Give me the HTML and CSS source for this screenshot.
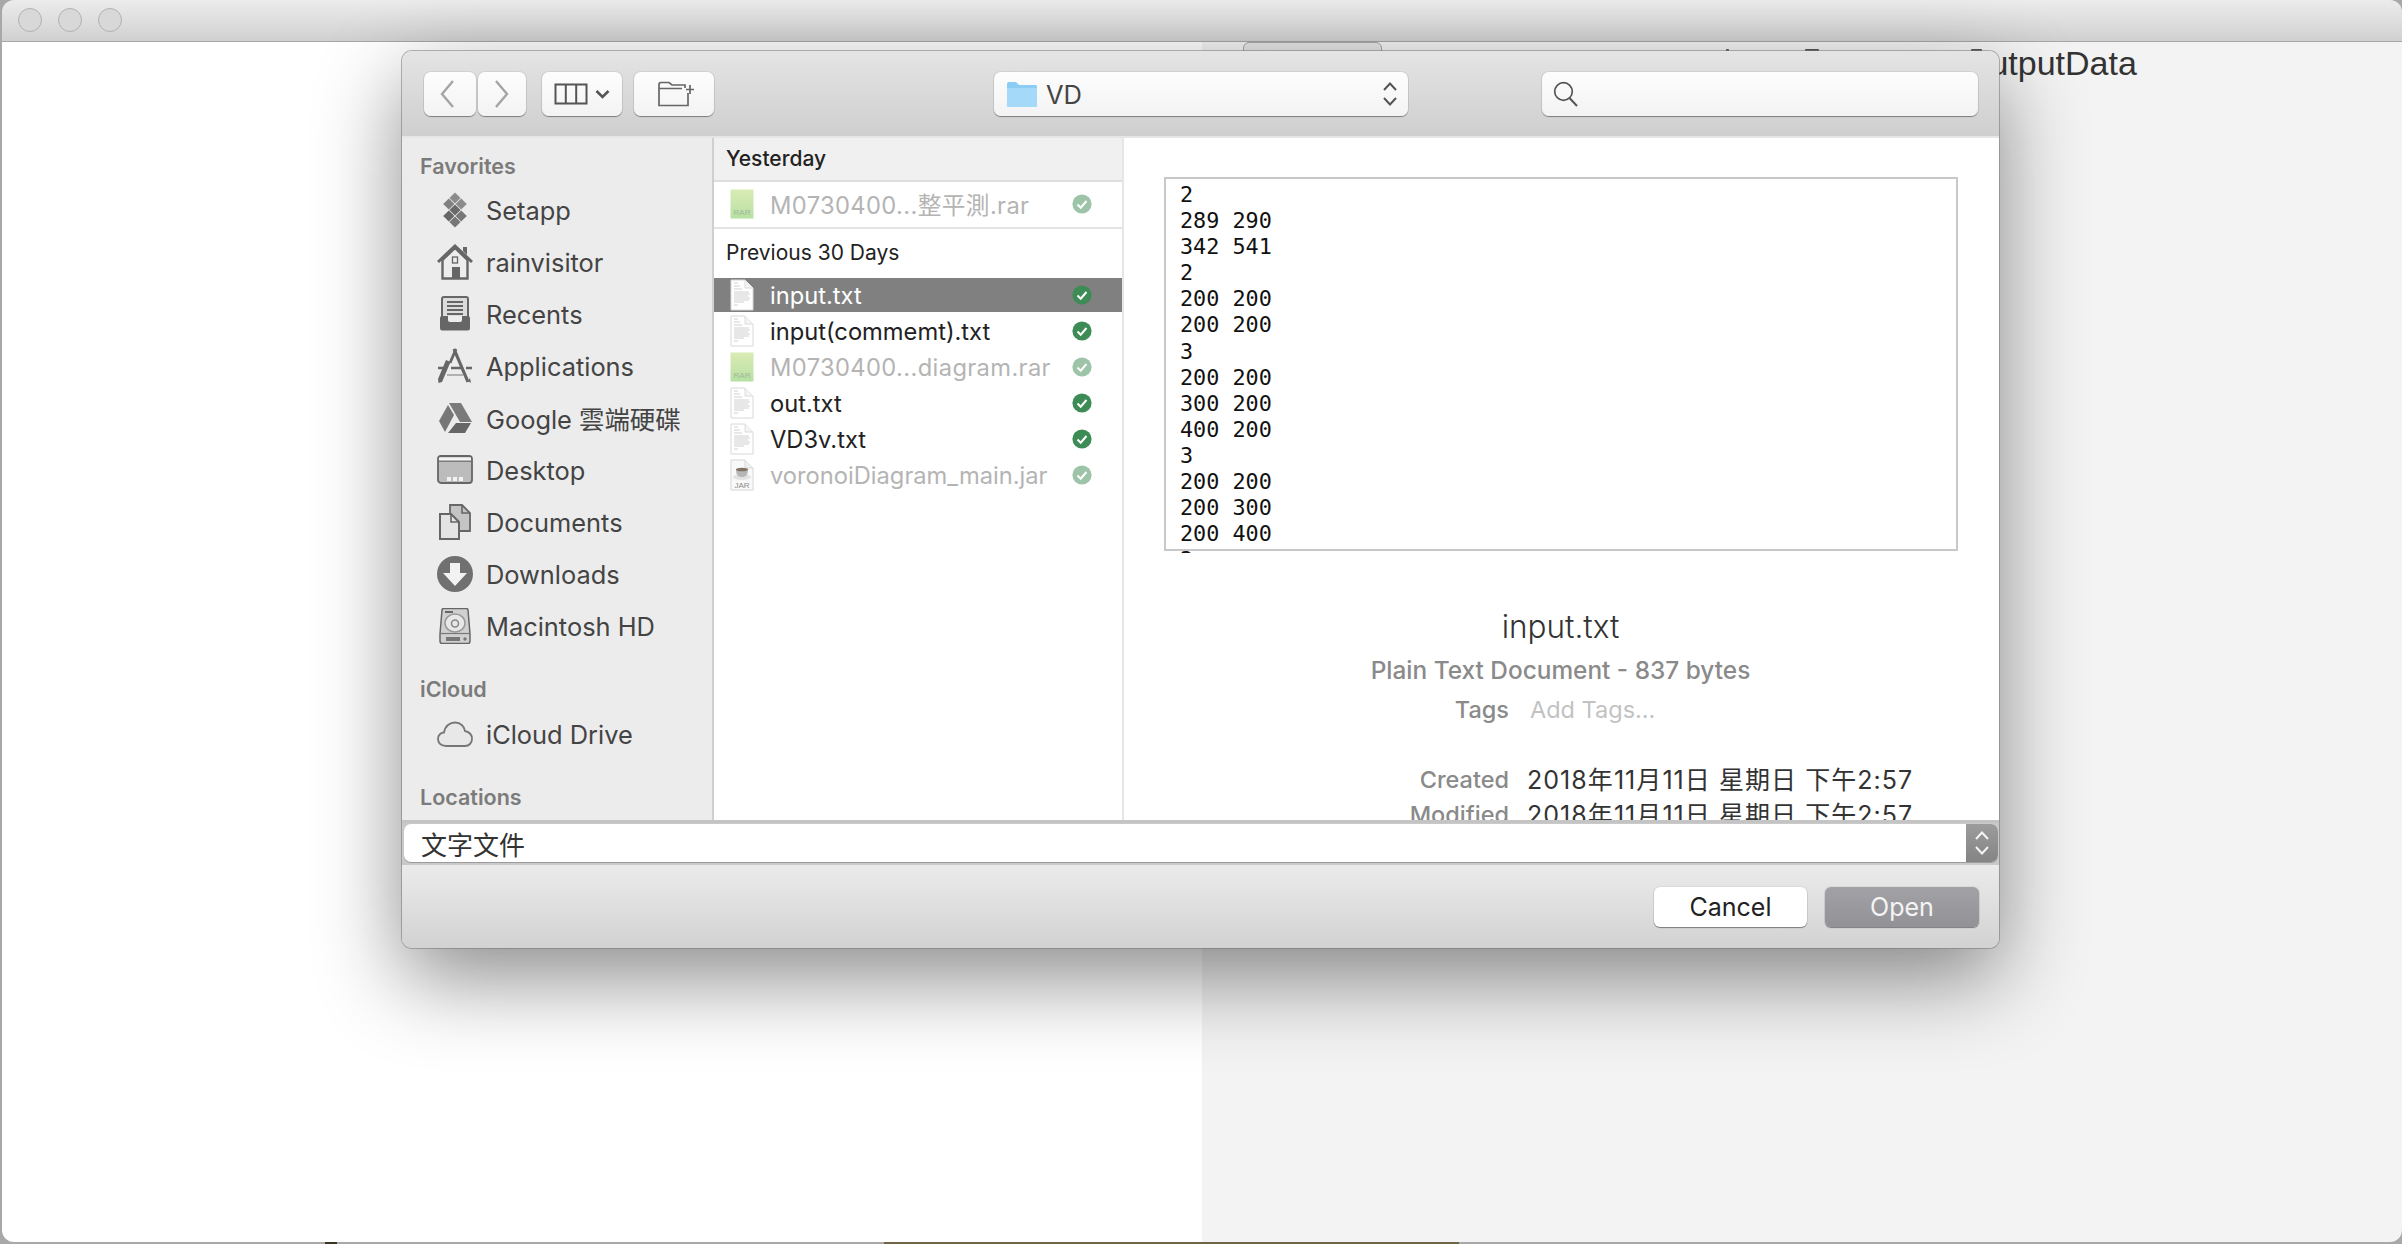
FILE: index.html
```html
<!DOCTYPE html>
<html lang="en">
<head>
<meta charset="utf-8">
<title>Open</title>
<link rel="stylesheet" href="styles.css">
</head>
<body>
<svg class="sprite" width="0" height="0" aria-hidden="true">
  <symbol id="doc" viewBox="0 0 24 32">
    <path d="M1 1H15L23 9V31H1Z" fill="#fff" stroke="#d8d8d8"/>
    <path d="M15 1V9H23" fill="#f4f4f4" stroke="#dcdcdc"/>
    <path d="M4 4H8M4 7H10M4 10H12M4 13H19M4 15H20M4 17H18M4 19H20M4 21H19M4 23H14M4 26H8" stroke="#c4c4c4" stroke-width=".8"/>
  </symbol>
  <symbol id="rar" viewBox="0 0 24 30">
    <defs><linearGradient id="rarfill" x1="0" y1="0" x2="0" y2="1"><stop offset="0" stop-color="#d4e8a8"/><stop offset=".7" stop-color="#b8e09a"/><stop offset="1" stop-color="#a8dc92"/></linearGradient></defs>
    <rect x=".5" y=".5" width="23" height="29" fill="url(#rarfill)"/>
    <text x="12" y="26" text-anchor="middle" class="tiny" fill="#8fa98a">RAR</text>
  </symbol>
  <symbol id="jar" viewBox="0 0 24 32">
    <path d="M1 1H15L23 9V31H1Z" fill="#f8f8f8" stroke="#d0d0d0"/>
    <path d="M15 1V9H23" fill="#eee" stroke="#d0d0d0"/>
    <ellipse cx="12" cy="18" rx="9" ry="3" fill="#ddd"/>
    <path d="M6 10H18C18 16 16 18 12 18S6 16 6 10Z" fill="#aaa"/>
    <ellipse cx="12" cy="10.500" rx="6" ry="1.800" fill="#6b5b4b"/>
    <text x="12" y="29" text-anchor="middle" class="tiny" fill="#777">JAR</text>
  </symbol>
  <symbol id="check" viewBox="0 0 20 20">
    <circle cx="10" cy="10" r="9.600" fill="#3d8b55"/>
    <path d="M5.500 10.500L8.700 13.700L14.500 7" fill="none" stroke="#fff" stroke-width="2"/>
  </symbol>
  <symbol id="updown" viewBox="0 0 16 26">
    <path d="M2 9L8 2.500L14 9M2 17L8 23.500L14 17" fill="none" stroke="currentColor" stroke-width="2"/>
  </symbol>
</svg>

<div class="window">
  <header class="titlebar">
    <span class="light"></span><span class="light"></span><span class="light"></span>
  </header>
  <div class="panes">
    <div class="pane-left"></div>
    <div class="pane-right">
      <div class="tab"></div>
      <div class="output-label">OutputData</div>
    </div>
  </div>
</div>
<span class="speck speck-a"></span><span class="speck speck-b"></span><span class="speck speck-c"></span>

<section class="dialog">
  <div class="toolbar">
    <button class="tb back"><svg width="16" height="30" viewBox="0 0 16 30"><path d="M14 2L3 15L14 28" fill="none" stroke="#a4a4a4" stroke-width="2.400"/></svg></button>
    <button class="tb fwd"><svg width="16" height="30" viewBox="0 0 16 30"><path d="M2 2L13 15L2 28" fill="none" stroke="#a4a4a4" stroke-width="2.400"/></svg></button>
    <button class="tb view">
      <svg width="34" height="22" viewBox="0 0 34 22"><path d="M1.500 1.500H32.500V20.500H1.500ZM11.800 1.500V20.500M22.200 1.500V20.500" fill="none" stroke="#555" stroke-width="2"/></svg>
      <svg width="15" height="10" viewBox="0 0 15 10"><path d="M1.500 2L7.500 8L13.500 2" fill="none" stroke="#555" stroke-width="2.600"/></svg>
    </button>
    <button class="tb newfolder"><svg width="36" height="26" viewBox="0 0 36 26"><path d="M1 4C1 2 1.500 1.500 3 1.500H11L14 4H27V7M1 4V24.500H30V12M1 7.500H24" fill="none" stroke="#666" stroke-width="1.700"/><path d="M28 8.500H36M32 4V13" fill="none" stroke="#666" stroke-width="1.700"/></svg></button>
    <div class="tb location">
      <svg class="folder" width="30" height="25" viewBox="0 0 30 25"><path d="M0 3C0 1 .5 0 2 0H9L12 3H28C29.500 3 30 3.500 30 5V23C30 24.500 29.500 25 28 25H2C.5 25 0 24.500 0 23Z" fill="#8ccdf6"/><path d="M0 6H30V23C30 24.500 29.500 25 28 25H2C.5 25 0 24.500 0 23Z" fill="#a4d9fa"/></svg>
      <span class="loc-name">VD</span>
      <svg class="updown" width="16" height="26"><use href="#updown"/></svg>
    </div>
    <div class="tb search"><svg width="26" height="26" viewBox="0 0 26 26"><circle cx="10.500" cy="10.500" r="8.800" fill="none" stroke="#555" stroke-width="1.700"/><path d="M16.500 17L24 25" stroke="#555" stroke-width="2"/></svg></div>
  </div>

  <div class="main">
    <aside class="sidebar">
      <h3 class="side-head first">Favorites</h3>
      <div class="side-item">
        <svg class="side-icon" viewBox="0 0 36 36"><path d="M18 .4L23.600 6L18 11.600L12.400 6Z" fill="#8c8c8c"/><path d="M11.800 6.400L17.400 12L11.800 17.600L6.200 12Z" fill="#808080"/><path d="M24.200 6.400L29.800 12L24.200 17.600L18.600 12Z" fill="#8c8c8c"/><path d="M18 12.400L23.600 18L18 23.600L12.400 18Z" fill="#6a6a6a"/><path d="M11.800 18.400L17.400 24L11.800 29.600L6.200 24Z" fill="#666"/><path d="M24.200 18.400L29.800 24L24.200 29.600L18.600 24Z" fill="#777"/><path d="M18 24.400L23.600 30L18 35.600L12.400 30Z" fill="#777"/></svg>
        <span>Setapp</span>
      </div>
      <div class="side-item">
        <svg class="side-icon" viewBox="0 0 36 36"><path d="M5.500 16V34.500H30.500V16L18 4Z" fill="#ededed" stroke="#666" stroke-width="2.400"/><path d="M1 18L18 2L35 18" fill="none" stroke="#666" stroke-width="3"/><path d="M26 3H30V11L26 7Z" fill="#666"/><rect x="15" y="23" width="8" height="12" fill="#666"/><rect x="15.500" y="13" width="5" height="6" fill="none" stroke="#666" stroke-width="1.300"/></svg>
        <span>rainvisitor</span>
      </div>
      <div class="side-item">
        <svg class="side-icon" viewBox="0 0 36 36"><path d="M5 3Q5 1 7 1H29Q31 1 31 3V22H5Z" fill="#dcdcdc" stroke="#666" stroke-width="2"/><path d="M10 6H26M10 10H26M10 14H26M10 18H26" stroke="#666" stroke-width="2"/><path d="M3 22Q3 20 5 20H31Q33 20 33 22V32Q33 34.500 31 34.500H5Q3 34.500 3 32Z" fill="#666"/><path d="M11 20V24Q11 26 13 26H23Q25 26 25 24V20Z" fill="#ececec"/></svg>
        <span>Recents</span>
      </div>
      <div class="side-item">
        <svg class="side-icon" viewBox="0 0 36 36"><path d="M17 1L31 34" fill="none" stroke="#666" stroke-width="3.200"/><path d="M19 1L13 15" fill="none" stroke="#666" stroke-width="2.800"/><path d="M9 12L13.500 14L5 34L1.500 35L1 31Z" fill="#666"/><path d="M1 20H10M14 20H26M29 20H35" stroke="#666" stroke-width="2.600"/><path d="M10 27L26 27" stroke="#999" stroke-width="1.400"/><path d="M31 33L34 35L33 30Z" fill="#666"/></svg>
        <span>Applications</span>
      </div>
      <div class="side-item">
        <svg class="side-icon" viewBox="0 0 36 36"><path d="M12 3H24L35 22H23Z" fill="#7a7a7a"/><path d="M11 5L17 15L8 32L2 21Z" fill="#777"/><path d="M19 23H34L28 33H11Z" fill="#666"/></svg>
        <span class="cjk">Google 雲端硬碟</span>
      </div>
      <div class="side-item">
        <svg class="side-icon" viewBox="0 0 36 36"><rect x="1" y="4" width="34" height="27" rx="3" fill="#bcbcbc" stroke="#666" stroke-width="1.800"/><path d="M2 9H34" stroke="#666" stroke-width="1.500"/><path d="M2 5.500H34V8.500H2Z" fill="#f4f4f4"/><path d="M10 25H14V29H10ZM16 25H20V29H16ZM22 25H26V29H22Z" fill="#f2f2f2"/></svg>
        <span>Desktop</span>
      </div>
      <div class="side-item">
        <svg class="side-icon" viewBox="0 0 36 36"><path d="M13 1H25L33 9V27H13Z" fill="#c4c4c4" stroke="#666" stroke-width="1.800"/><path d="M3 10H14L22 18V35H3Z" fill="#e4e4e4" stroke="#666" stroke-width="2"/><path d="M25 1V9H33M14 10V18H22" fill="none" stroke="#666" stroke-width="1.600"/></svg>
        <span>Documents</span>
      </div>
      <div class="side-item">
        <svg class="side-icon" viewBox="0 0 36 36"><circle cx="18" cy="18" r="18" fill="#707070"/><path d="M13 7H23V17H30L18 30L6 17H13Z" fill="#f2f2f2"/></svg>
        <span>Downloads</span>
      </div>
      <div class="side-item">
        <svg class="side-icon" viewBox="0 0 36 36"><path d="M5 2Q5 .5 7 .5H29Q31 .5 31 2L33 26V33Q33 35.500 31 35.500H5Q3 35.500 3 33V26Z" fill="#d0d0d0" stroke="#666" stroke-width="1.500"/><path d="M8 4H16" stroke="#666" stroke-width="2"/><ellipse cx="18" cy="15" rx="10" ry="9" fill="#e8e8e8" stroke="#999" stroke-width="1.500"/><circle cx="18" cy="15.500" r="3.500" fill="none" stroke="#888" stroke-width="1.600"/><path d="M3 25.500H33" stroke="#777" stroke-width="1.200"/><path d="M9 29H23V33H9Z" fill="#777"/><circle cx="28" cy="31" r="1.700" fill="#777"/></svg>
        <span>Macintosh HD</span>
      </div>
      <h3 class="side-head">iCloud</h3>
      <div class="side-item icloud">
        <svg class="side-icon" viewBox="0 0 36 36"><path d="M9 30C3 30 1 26 1 23C1 19 4 16.500 7 16.500C8 10 13 6.500 18 6.500C24 6.500 27.500 11 28 15C32.500 16 35 19 35 23C35 27 32 30 28 30Z" fill="#e8e8e8" stroke="#777" stroke-width="1.800"/></svg>
        <span>iCloud Drive</span>
      </div>
      <h3 class="side-head">Locations</h3>
    </aside>

    <div class="filelist">
      <div class="group-head shaded">Yesterday</div>
      <div class="row single dim">
        <svg class="file-icon" width="24" height="30"><use href="#rar"/></svg>
        <span class="name cjk wide">M0730400...整平測.rar</span>
        <svg class="mark" width="20" height="20"><use href="#check"/></svg>
      </div>
      <div class="group-head">Previous 30 Days</div>
      <div class="row selected">
        <svg class="file-icon" width="24" height="32"><use href="#doc"/></svg>
        <span class="name">input.txt</span>
        <svg class="mark" width="20" height="20"><use href="#check"/></svg>
      </div>
      <div class="row">
        <svg class="file-icon" width="24" height="32"><use href="#doc"/></svg>
        <span class="name">input(commemt).txt</span>
        <svg class="mark" width="20" height="20"><use href="#check"/></svg>
      </div>
      <div class="row dim">
        <svg class="file-icon" width="24" height="30"><use href="#rar"/></svg>
        <span class="name wide">M0730400...diagram.rar</span>
        <svg class="mark" width="20" height="20"><use href="#check"/></svg>
      </div>
      <div class="row">
        <svg class="file-icon" width="24" height="32"><use href="#doc"/></svg>
        <span class="name">out.txt</span>
        <svg class="mark" width="20" height="20"><use href="#check"/></svg>
      </div>
      <div class="row">
        <svg class="file-icon" width="24" height="32"><use href="#doc"/></svg>
        <span class="name">VD3v.txt</span>
        <svg class="mark" width="20" height="20"><use href="#check"/></svg>
      </div>
      <div class="row dim">
        <svg class="file-icon" width="24" height="32"><use href="#jar"/></svg>
        <span class="name">voronoiDiagram_main.jar</span>
        <svg class="mark" width="20" height="20"><use href="#check"/></svg>
      </div>
    </div>

    <div class="preview">
      <pre class="preview-box">2
289 290
342 541
2
200 200
200 200
3
200 200
300 200
400 200
3
200 200
200 300
200 400
2</pre>
      <div class="file-title">input.txt</div>
      <div class="file-kind">Plain Text Document - 837 bytes</div>
      <dl class="meta tags">
        <dt>Tags</dt><dd class="placeholder">Add Tags...</dd>
      </dl>
      <dl class="meta dates">
        <dt>Created</dt><dd class="cjk">2018年11月11日 星期日 下午2:57</dd>
        <dt>Modified</dt><dd class="cjk">2018年11月11日 星期日 下午2:57</dd>
      </dl>
    </div>
  </div>

  <div class="typebar">
    <div class="typefield">
      <span class="type-text">文字文件</span>
      <span class="stepper"><svg width="16" height="26"><use href="#updown"/></svg></span>
    </div>
  </div>

  <div class="actions">
    <button class="act cancel">Cancel</button>
    <button class="act open">Open</button>
  </div>
</section>
</body>
</html>
```
FILE: styles.css
```css
* { box-sizing: border-box; }
html, body { margin: 0; padding: 0; }
body {
  position: relative;
  width: 2402px;
  height: 1244px;
  overflow: hidden;
  font-family: Inter, "Noto Sans CJK TC", sans-serif;
  background: linear-gradient(to right, #a8a8a8 325px, #3a3222 325px 337px, #a8a8a8 337px 884px, #6d6544 884px 1459px, #a8a8a8 1459px);
}
.sprite { position: absolute; }
.tiny { font: 8px "Liberation Sans", sans-serif; }
.cjk { font-family: Inter, "Noto Sans CJK TC", sans-serif; }

.window {
  margin-left: 2px;
  width: 2400px;
  height: 1242px;
  border-radius: 12px;
  overflow: hidden;
  display: flex;
  flex-direction: column;
}
.titlebar {
  flex: none;
  height: 42px;
  padding-left: 16px;
  display: flex;
  align-items: center;
  gap: 16px;
  background: linear-gradient(#ececec, #d0d0d0);
  border-bottom: 1px solid #a6a6a6;
}
.light {
  width: 24px;
  height: 24px;
  border-radius: 50%;
  background: #d8d8d8;
  border: 1px solid #b0b0b0;
  position: relative;
  top: -1px;
}
.panes { flex: 1; display: flex; }
.pane-left { width: 1200px; background: #fff; }
.pane-right { flex: 1; background: #f3f3f3; display: flex; align-items: flex-start; }
.tab {
  margin-left: 41px;
  width: 139px;
  height: 12px;
  background: #e6e6e6;
  border: 1px solid #a8a8a8;
  border-radius: 6px 6px 0 0;
}
.output-label {
  margin-left: 581px;
  margin-top: 1px;
  font: 34px/40px "Liberation Sans", sans-serif;
  color: #333;
}
.speck {
  position: absolute;
  top: 49px;
  height: 2px;
  background: #555;
  border-radius: 1px 1px 0 0;
}
.speck-a { left: 1726px; width: 3px; }
.speck-b { left: 1805px; width: 14px; }
.speck-c { left: 1971px; width: 11px; }

.dialog {
  position: absolute;
  left: 402px;
  top: 51px;
  width: 1597px;
  height: 897px;
  border-radius: 10px;
  overflow: hidden;
  display: flex;
  flex-direction: column;
  box-shadow: 0 0 0 1px rgba(120,120,120,.55), 0 30px 85px rgba(0,0,0,.46);
  background: #fff;
}
.toolbar {
  flex: none;
  height: 87px;
  padding: 21px 0 0 22px;
  display: flex;
  align-items: flex-start;
  background: linear-gradient(#e4e4e4, #cfcfcf);
  border-bottom: 2px solid #e6e6e6;
}
.tb {
  height: 44px;
  padding: 0;
  border: 0;
  border-radius: 7px;
  background: linear-gradient(#fdfdfd, #f3f3f3);
  box-shadow: 0 1px 1px rgba(0,0,0,.38), 0 0 0 1px rgba(0,0,0,.06);
  display: flex;
  align-items: center;
  justify-content: center;
}
.back { width: 52px; padding-right: 6px; }
.fwd { width: 48px; margin-left: 2px; }
.view { width: 80px; margin-left: 16px; gap: 7px; padding-right: 1px; }
.newfolder { width: 80px; margin-left: 12px; padding-left: 4px; }
.location {
  width: 414px;
  margin-left: 280px;
  padding: 0 10px 0 13px;
  justify-content: flex-start;
  font-size: 25.500px;
  color: #444;
}
.loc-name { margin-left: 9px; }
.updown { margin-left: auto; color: #555; }
.search {
  width: 436px;
  margin-left: 134px;
  padding-left: 11px;
  justify-content: flex-start;
}

.main {
  flex: none;
  height: 682px;
  display: grid;
  grid-template-columns: 312px 410px 1fr;
  overflow: hidden;
}
.sidebar {
  background: #ececec;
  border-right: 2px solid #cfcfcf;
  padding-top: 15px;
  overflow: hidden;
}
.side-head {
  margin: 24px 0 6px;
  padding-left: 18px;
  font-size: 21.500px;
  line-height: 26px;
  font-weight: 600;
  color: #7b7b7b;
}
.side-head.first { margin: 0 0 5px; }
.side-item {
  height: 52px;
  padding-left: 35px;
  display: flex;
  align-items: center;
  gap: 13px;
  font-size: 25.400px;
  color: #444;
}
.side-icon { width: 36px; height: 36px; flex: none; }

.filelist { border-right: 2px solid #e6e6e6; overflow: hidden; }
.group-head {
  height: 49px;
  padding: 0 0 3px 12px;
  display: flex;
  align-items: center;
  font-size: 21px;
  color: #222;
}
.group-head.shaded {
  height: 44px;
  padding-bottom: 2px;
  background: #f0f0f0;
  border-bottom: 2px solid #dedede;
  font-weight: 500;
}
.row {
  height: 34px;
  margin-bottom: 2px;
  padding-left: 16px;
  display: flex;
  align-items: center;
  font-size: 23.700px;
  color: #222;
}
.row.single {
  height: 47px;
  margin-bottom: 0;
  padding-bottom: 2px;
  border-bottom: 2px solid #e4e4e4;
}
.row.dim { color: #b4b4b4; }
.row.dim .mark { opacity: .5; }
.row.dim .file-icon { opacity: .85; }
.row.selected { background: #808080; color: #fff; }
.file-icon { flex: none; }
.name { margin-left: 16px; white-space: nowrap; }
.wide { letter-spacing: .38px; }
.mark { flex: none; margin-left: auto; margin-right: 30px; }

.preview { overflow: hidden; }
.preview-box {
  margin: 39px 0 0 40px;
  width: 794px;
  height: 374px;
  padding: 3px 0 0 14px;
  border: 2px solid #c8c8c8;
  overflow: clip;
  overflow-clip-margin: 4px;
  font: 21.800px/26.100px "DejaVu Sans Mono", monospace;
  color: #111;
}
.file-title {
  margin-top: 56px;
  padding-right: 2px;
  text-align: center;
  font-size: 31.500px;
  line-height: 40px;
  font-weight: 300;
  color: #333;
}
.file-kind {
  margin-top: 8px;
  padding-right: 2px;
  text-align: center;
  font-size: 24.400px;
  line-height: 30px;
  font-weight: 500;
  color: #8a8a8a;
}
.meta {
  margin: 10px 0 0;
  display: grid;
  grid-template-columns: 385px 1fr;
  column-gap: 18px;
  row-gap: 5px;
  font-size: 23.500px;
  line-height: 30px;
}
.meta dt { text-align: right; font-weight: 500; color: #8a8a8a; }
.meta dd { margin: 0; color: #333; white-space: nowrap; }
.dates dd { font-size: 25px; letter-spacing: 1.050px; }
.meta dd.placeholder { margin-left: 3px; color: #c2c2c2; }
.dates { margin-top: 40px; }

.typebar {
  flex: none;
  height: 45px;
  padding: 4px 1px 3px 2px;
  background: linear-gradient(#c4c4c4 0 3px, #c9c9c9 3px);
}
.typefield {
  height: 38px;
  display: flex;
  justify-content: space-between;
  background: #fff;
  border-radius: 7px;
  overflow: hidden;
  box-shadow: 0 1px 0 #9c9c9c;
}
.type-text {
  margin-left: 17px;
  font: 26px/39px "Noto Sans CJK TC", sans-serif;
  color: #333;
}
.stepper {
  width: 32px;
  display: flex;
  align-items: center;
  justify-content: center;
  color: #f4f4f4;
  background: linear-gradient(#9c9c9c, #848484);
}

.actions {
  flex: 1;
  padding: 22px 20px 0 0;
  display: flex;
  justify-content: flex-end;
  align-items: flex-start;
  gap: 18px;
  background: linear-gradient(#ebebeb, #d2d2d2);
}
.act {
  width: 153px;
  height: 40px;
  border: 0;
  border-radius: 6px;
  font-family: Inter, sans-serif;
  font-size: 25px;
  padding: 0;
  box-shadow: 0 1px 1px rgba(0,0,0,.4), 0 0 0 1px rgba(0,0,0,.05);
}
.cancel { background: #fff; color: #222; }
.open { width: 154px; background: linear-gradient(#a2a2a6, #929296); color: #f4f4f4; }
```
